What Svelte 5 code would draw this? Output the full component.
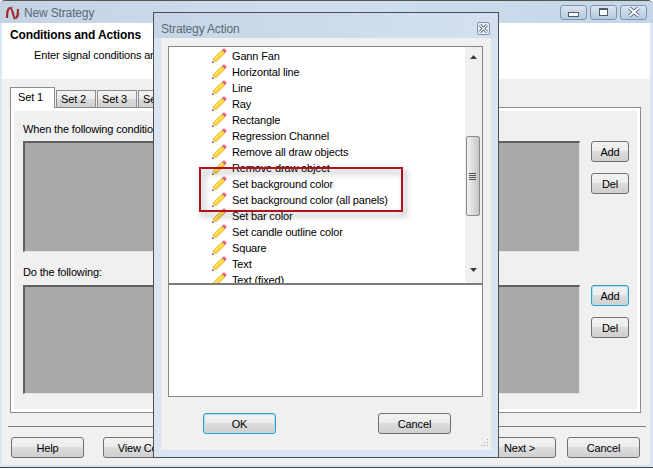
<script lang="ts">
  const items = [
    'Gann Fan',
    'Horizontal line',
    'Line',
    'Ray',
    'Rectangle',
    'Regression Channel',
    'Remove all draw objects',
    'Remove draw object',
    'Set background color',
    'Set background color (all panels)',
    'Set bar color',
    'Set candle outline color',
    'Square',
    'Text',
    'Text (fixed)'
  ];
  const tabs = ['Set 1', 'Set 2', 'Set 3', 'Set 4'];
</script>

<div class="win">
  <div class="titlebar">
    <svg class="logo" viewBox="0 0 16 14" width="16" height="14">
      <path d="M2 7c0-4 3-6 6-6M14 7c0 4-3 6-6 6" fill="none" stroke="#8d9097" stroke-width="1.6" />
      <path d="M2 12C2 6 3 2 5 2c3 0 3 10 5 10 2 0 3-4 3-9" fill="none" stroke="#a8292a" stroke-width="2.2" />
    </svg>
    <span class="title">New Strategy</span>
    <div class="controls">
      <div class="ctl"><i class="min"></i></div>
      <div class="ctl"><i class="max"></i></div>
      <div class="ctl">
        <svg viewBox="0 0 12 10" width="12" height="10"><path d="M1.5 1l9 8M10.5 1l-9 8" stroke="#4c5a6c" stroke-width="3.6" /><path d="M1.5 1l9 8M10.5 1l-9 8" stroke="#fff" stroke-width="1.8" /></svg>
      </div>
    </div>
  </div>

  <div class="header">
    <div class="h-title">Conditions and Actions</div>
    <div class="h-sub">Enter signal conditions and actions for this strategy</div>
  </div>

  <div class="body">
    <div class="tabs">
      {#each tabs as tab, i}
        <div class="tab" class:active={i === 0}>{tab}</div>
      {/each}
    </div>
    <div class="panel">
      <div class="page">
        <div class="label first">When the following conditions are met:</div>
        <div class="section tall">
          <div class="box"></div>
          <div class="side">
            <button class="btn small">Add</button>
            <button class="btn small">Del</button>
          </div>
        </div>
        <div class="label second">Do the following:</div>
        <div class="section">
          <div class="box"></div>
          <div class="side">
            <button class="btn small focus">Add</button>
            <button class="btn small">Del</button>
          </div>
        </div>
      </div>
    </div>
    <div class="sep"></div>
    <div class="footer">
      <button class="btn help">Help</button>
      <button class="btn wide">View Code...</button>
      <button class="btn wide"></button>
      <button class="btn wide"></button>
      <button class="btn back">&lt; Back</button>
      <button class="btn next">Next &gt;</button>
      <button class="btn cancel">Cancel</button>
    </div>
  </div>

  <div class="dialog">
    <div class="d-title">
      <span>Strategy Action</span>
      <div class="d-close">
        <svg viewBox="0 0 9 9" width="9" height="9"><path d="M1 1l7 7M8 1l-7 7" stroke="#4c5a6c" stroke-width="3" /><path d="M1 1l7 7M8 1l-7 7" stroke="#fff" stroke-width="1.2" /></svg>
      </div>
    </div>
    <div class="d-inner">
      <div class="listbox">
        <div class="list">
          {#each items as item}
            <div class="row">
              <svg class="pencil" viewBox="0 0 16 16" width="16" height="16">
                <path d="M1 15l1-4 3 3z" fill="#e8d5b0" />
                <path d="M1 15l.5-2 1.5 1.5z" fill="#555" />
                <path d="M2 11l9-9 3 3-9 9z" fill="#f9d23c" stroke="#d9a520" stroke-width=".6" />
                <path d="M3.5 11.5l8.5-8.5" stroke="#fdeb96" stroke-width="1" />
                <path d="M11 2l1.3-1.3c.5-.4 1-.4 1.4 0l1.6 1.6c.4.4.4.9 0 1.4L14 5z" fill="#e8636f" />
              </svg>
              <span>{item}</span>
            </div>
          {/each}
        </div>
        <div class="scroll">
          <svg class="arrow" viewBox="0 0 7 4" width="7" height="4"><path d="M3.5 0L7 4H0z" fill="#3c3c3c" /></svg>
          <div class="thumb"><i></i><i></i><i></i><i></i></div>
          <svg class="arrow down" viewBox="0 0 7 4" width="7" height="4"><path d="M0 0h7L3.5 4z" fill="#3c3c3c" /></svg>
        </div>
      </div>
      <div class="desc"></div>
      <div class="d-buttons">
        <button class="btn d-btn focus">OK</button>
        <button class="btn d-btn">Cancel</button>
      </div>
      <svg class="grip" viewBox="0 0 10 10" width="10" height="10">
        <path d="M8 1h1v1H8zM5 4h1v1H5zM8 4h1v1H8zM2 7h1v1H2zM5 7h1v1H5zM8 7h1v1H8z" fill="#a8a8a8" />
      </svg>
    </div>
  </div>

  <div class="callout"></div>
</div>

<style>
  :global(body) {
    margin: 0;
    background: #fff;
  }

  .win {
    position: relative;
    width: 653px;
    height: 468px;
    box-sizing: border-box;
    display: flex;
    flex-direction: column;
    background: #dbe6f2;
    border-top: 1px solid #555;
    border-bottom: 1px solid #3c4650;
    border-radius: 5px 5px 0 0;
    overflow: hidden;
    font: 11px/16px "Liberation Sans", sans-serif;
    letter-spacing: -0.15px;
    color: #000;
  }

  .titlebar {
    height: 22px;
    flex: none;
    box-sizing: border-box;
    padding: 2px 0 0 5px;
    display: flex;
    align-items: center;
    background: linear-gradient(90deg, #c3d3e3, #cfdfee 50%, #c4d6e7);
  }

  .logo {
    margin-right: 3px;
  }

  .title {
    font-size: 12px;
    color: #5b6a78;
  }

  .controls {
    margin: -2px 6px 0 auto;
    display: flex;
    gap: 3px;
  }

  .ctl {
    width: 27px;
    height: 15px;
    box-sizing: border-box;
    border: 1px solid #8095ad;
    border-radius: 3px;
    background: linear-gradient(#dbe6f1, #c6d6e6 50%, #b8cbdd);
    display: flex;
    align-items: center;
    justify-content: center;
  }

  .min {
    width: 9px;
    height: 3px;
    margin-top: 5px;
    background: #fff;
    border: 1px solid #4c5a6c;
  }

  .max {
    width: 7px;
    height: 5px;
    background: #fff;
    border: 1px solid #4c5a6c;
    border-top-width: 2px;
    margin-top: -1px;
  }

  .header {
    height: 56px;
    flex: none;
    margin: 0 3px 0 2px;
    box-sizing: border-box;
    padding: 4px 0 0 8px;
    background: #fff;
    white-space: nowrap;
  }

  .h-title {
    font-weight: 700;
    font-size: 12px;
  }

  .h-sub {
    margin: 4px 0 0 24px;
  }

  .body {
    flex: 1;
    margin: 0 3px 2px 2px;
    padding: 8px 0 0 8px;
    background: #f0f0f0;
    display: flex;
    flex-direction: column;
  }

  .tabs {
    display: flex;
    align-items: flex-end;
    height: 21px;
    gap: 1px;
    margin-bottom: -1px;
  }

  .tab {
    width: 40px;
    height: 18px;
    box-sizing: border-box;
    border: 1px solid #898c95;
    border-bottom: 0;
    padding-right: 5px;
    text-align: center;
    line-height: 17px;
    background: linear-gradient(#f2f2f2, #ebebeb 50%, #d9d9d9 50%, #cfcfcf);
  }

  .tab.active {
    width: 45px;
    height: 21px;
    padding-right: 4px;
    background: #fff;
    position: relative;
    z-index: 1;
    line-height: 18px;
  }

  .panel {
    width: 631px;
    height: 306px;
    flex: none;
    box-sizing: border-box;
    border: 1px solid #898c95;
    padding: 3px;
    background: #fff;
  }

  .page {
    height: 100%;
    box-sizing: border-box;
    padding-left: 9px;
    background: #f0f0f0;
  }

  .label {
    height: 16px;
    white-space: nowrap;
  }

  .label.first {
    padding-top: 10px;
    margin-bottom: 4px;
  }

  .label.second {
    margin-top: 12px;
    margin-bottom: 5px;
  }

  .section {
    display: flex;
    gap: 11px;
    height: 109px;
  }

  .section.tall {
    height: 111px;
  }

  .box {
    width: 557px;
    box-sizing: border-box;
    background: #a9a9a9;
    border-style: solid;
    border-width: 2px 1px 1px 2px;
    border-color: #5f5f5f #e4e4e4 #e4e4e4 #5f5f5f;
  }

  .side {
    display: flex;
    flex-direction: column;
    gap: 11px;
  }

  .btn {
    height: 21px;
    box-sizing: border-box;
    padding: 0;
    border: 1px solid #707070;
    border-radius: 3px;
    background: linear-gradient(#f2f2f2, #ebebeb 48%, #dddddd 50%, #cfcfcf);
    font: inherit;
    letter-spacing: inherit;
    color: #000;
  }

  .btn.focus {
    border-color: #3c9ad0;
    box-shadow: inset 0 0 0 1px #a8e0f5;
  }

  .small {
    width: 38px;
  }

  .sep {
    height: 1px;
    flex: none;
    margin: 13px 4px 0 -2px;
    background: #7f7f7f;
  }

  .footer {
    display: flex;
    margin: 10px 0 0 1px;
  }

  .help {
    width: 73px;
    margin-right: 19px;
  }

  .wide {
    width: 90px;
    margin-right: 10px;
  }

  .back {
    width: 74px;
    margin: 0 2px 0 4px;
  }

  .next {
    width: 73px;
    margin-right: 11px;
  }

  .cancel {
    width: 73px;
  }

  .dialog {
    position: absolute;
    left: 153px;
    top: 11px;
    width: 346px;
    height: 446px;
    box-sizing: border-box;
    border: 1px solid #4a4f55;
    background: #d9e5f3;
    display: flex;
    flex-direction: column;
  }

  .d-title {
    height: 25px;
    flex: none;
    box-sizing: border-box;
    display: flex;
    align-items: center;
    justify-content: space-between;
    padding: 6px 8px 0 7px;
    font-size: 12px;
    color: #5b6a78;
    background: linear-gradient(90deg, #c6d6e6, #d3e1ef);
  }

  .d-close {
    width: 13px;
    height: 13px;
    box-sizing: border-box;
    border: 1px solid #8095ad;
    border-radius: 2px;
    background: #e6eef6;
    display: flex;
    align-items: center;
    justify-content: center;
  }

  .d-inner {
    position: relative;
    flex: 1;
    margin: 0 7px 7px 7px;
    padding: 8px 8px 0 7px;
    background: #f0f0f0;
    display: flex;
    flex-direction: column;
  }

  .listbox {
    height: 237px;
    flex: none;
    box-sizing: border-box;
    display: flex;
    border: 1px solid #828790;
    border-bottom: 0;
    background: #fff;
  }

  .list {
    flex: 1;
    overflow: hidden;
    padding-top: 1px;
  }

  .row {
    height: 16px;
    display: flex;
    align-items: center;
    padding-left: 42px;
    gap: 5px;
    white-space: nowrap;
  }

  .pencil {
    flex: none;
  }

  .scroll {
    width: 17px;
    flex: none;
    display: flex;
    flex-direction: column;
    align-items: center;
    background: #f0f0f0;
  }

  .arrow {
    margin-top: 8px;
    flex: none;
  }

  .arrow.down {
    margin-top: 52px;
  }

  .thumb {
    width: 14px;
    height: 80px;
    flex: none;
    box-sizing: border-box;
    margin: 77px 2px 0 0;
    border: 1px solid #8a8a8a;
    border-radius: 2px;
    background: linear-gradient(90deg, #f3f3f3, #dcdcdc 50%, #c4c4c4);
    display: flex;
    flex-direction: column;
    align-items: center;
    justify-content: center;
    gap: 1px;
  }

  .thumb i {
    width: 7px;
    height: 1px;
    background: #555;
  }

  .desc {
    height: 114px;
    flex: none;
    box-sizing: border-box;
    border: 1px solid #828790;
    border-top: 2px solid #7b7b7b;
    background: #fff;
  }

  .d-buttons {
    display: flex;
    justify-content: space-between;
    margin: 16px 32px 0 35px;
  }

  .d-btn {
    width: 73px;
  }

  .grip {
    position: absolute;
    right: 2px;
    bottom: 2px;
  }

  .callout {
    position: absolute;
    left: 199px;
    top: 166px;
    width: 204px;
    height: 45px;
    box-sizing: border-box;
    border: 2px solid #b0121b;
    filter: drop-shadow(3px 4px 3px rgba(0, 0, 0, 0.4));
  }
</style>
